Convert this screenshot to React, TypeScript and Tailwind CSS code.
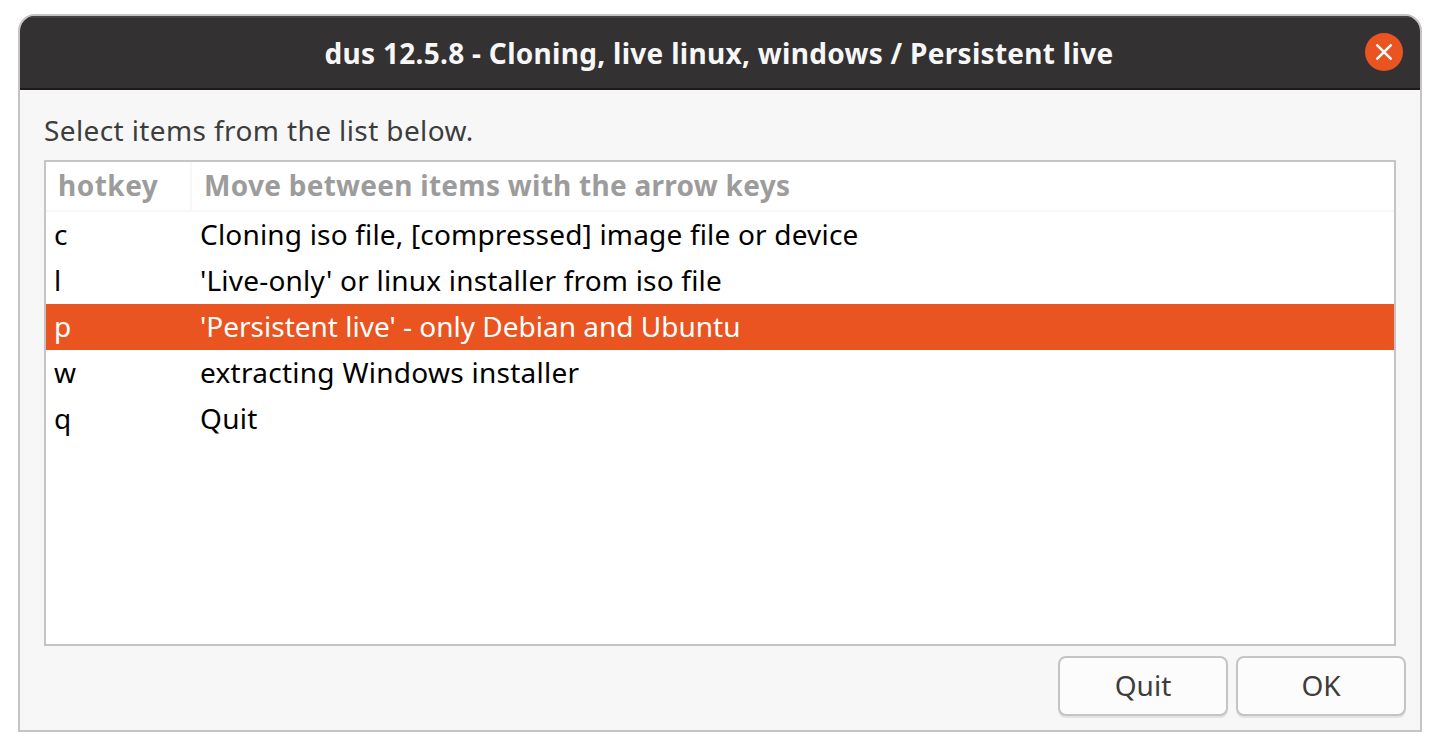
const rows = [
  { key: "c", label: "Cloning iso file, [compressed] image file or device", tracking: "tracking-[0.18px]" },
  { key: "l", label: "'Live-only' or linux installer from iso file", tracking: "tracking-[0.2px]" },
  { key: "p", label: "'Persistent live' - only Debian and Ubuntu", tracking: "tracking-normal", selected: true },
  { key: "w", label: "extracting Windows installer", tracking: "tracking-[0.27px]" },
  { key: "q", label: "Quit", tracking: "tracking-[0.3px]" },
];

function DialogButton({ label }: { label: string }) {
  return (
    <button className="h-[60px] w-[170px] rounded-lg border-2 border-[#c4c4c4] bg-[#fcfcfc] pb-[2px] shadow-[0_2px_0_#e2e2e2]">
      {label}
    </button>
  );
}

export default function App() {
  return (
    <div className="flex h-[750px] w-[1440px] bg-white pt-[14px] pl-[18px] font-['Noto_Sans',sans-serif] text-[28px]">
      <div className="flex h-[718px] w-[1404px] flex-col overflow-hidden rounded-t-[17px] border-2 border-[#c4c4c4] bg-[#f7f7f7] text-[#3d3d3d]">
        <header className="relative flex h-[74px] shrink-0 items-center justify-center border-t-2 border-b-2 border-t-[#434142] border-b-[#1c1a1b] bg-[#333132] font-bold text-[#f7f7f7]">
          <h1 className="pr-[2px] tracking-[0.29px] whitespace-pre">dus 12.5.8 - Cloning, live linux, windows / Persistent live</h1>
          <button aria-label="Close" className="absolute top-[15px] right-[17px] flex size-[38px] items-center justify-center rounded-full bg-[#e95420]">
            <svg width="16" height="16" viewBox="0 0 16 16" stroke="#fff" strokeWidth="2.5" strokeLinecap="round">
              <path d="M1.3 1.3L14.7 14.7M14.7 1.3L1.3 14.7" />
            </svg>
          </button>
        </header>
        <p className="mt-[17px] ml-[24px] h-[53px] shrink-0 leading-[46px] tracking-[0.39px]">Select items from the list below.</p>
        <div className="ml-[24px] h-[486px] w-[1352px] shrink-0 border-2 border-[#c4c4c4] bg-white text-black">
          <div className="flex h-[50px] border-b-2 border-[#f7f7f7] leading-[47px] font-bold text-[#9c9c9c]">
            <div className="w-[146px] border-r-2 border-[#f7f7f7] pl-[12px] tracking-[0.5px]">hotkey</div>
            <div className="pl-[12px] tracking-[0.27px]">Move between items with the arrow keys</div>
          </div>
          {rows.map((row) => (
            <div
              key={row.key}
              className={row.selected ? "flex h-[46px] bg-[#e95420] leading-[44px] text-white" : "flex h-[46px] leading-[44px]"}
            >
              <div className="w-[154px] pl-[8px]">{row.key}</div>
              <div className={row.tracking}>{row.label}</div>
            </div>
          ))}
        </div>
        <footer className="mt-[10px] mr-[14px] flex justify-end gap-2">
          <DialogButton label="Quit" />
          <DialogButton label="OK" />
        </footer>
      </div>
    </div>
  );
}
